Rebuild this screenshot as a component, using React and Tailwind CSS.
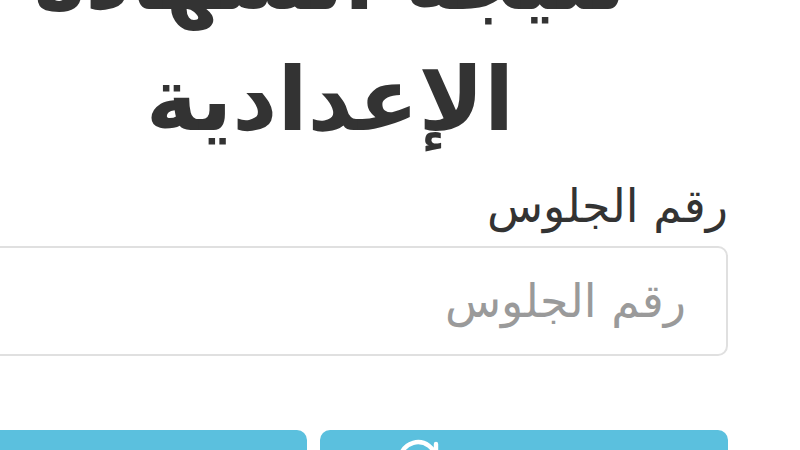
import React from 'react';

const arabic = { fontFamily: '"DejaVu Sans", "Noto Sans", sans-serif' };

function SearchIcon() {
    return (
        <svg width="48" height="48" viewBox="0 0 24 24" fill="none" stroke="white" strokeWidth="2.2" strokeLinecap="round" className="shrink-0">
            <circle cx="11" cy="11" r="9" />
            <path d="M17.5 17.5l5 5" />
        </svg>
    );
}

function RefreshIcon() {
    return (
        <svg width="48" height="48" viewBox="0 0 24 24" fill="none" stroke="white" strokeWidth="2.2" strokeLinecap="round" className="shrink-0">
            <path d="M20 11a9 9 0 1 0-2.6 6.4" />
            <path d="M20 3v8h-7" />
        </svg>
    );
}

export default function App() {
    return (
        <div className="w-[800px] h-[450px] overflow-hidden bg-white" style={arabic}>
            <div dir="rtl" className="-ml-[102px] w-[830px] mr-auto">
                <h1 className="-mt-[82px] ml-[34px] text-center text-[88px] leading-[121px] font-bold text-[#333333]">
                    نتيجة الشهادة
                    <br />
                    الإعدادية
                </h1>

                <label className="block mt-[18px] text-[46px] leading-[56px] text-[#333333]">رقم الجلوس</label>

                <div className="mt-[12px] h-[110px] rounded-[10px] border-2 border-[#e0e0e0] flex items-center pr-[40px]">
                    <span className="text-[46px] text-[#9a9a9a]">رقم الجلوس</span>
                </div>

                <div className="mt-[74px] grid grid-cols-2 gap-[13px]">
                    <div className="h-[80px] rounded-[10px] bg-[#5bc0de] text-white">
                        <div dir="ltr" className="flex items-start gap-4 pt-[8px] pl-[76px]">
                            <RefreshIcon />
                            <span dir="rtl" className="text-[42px] leading-[50px] mt-[6px] whitespace-nowrap">إعادة البحث</span>
                        </div>
                    </div>
                    <div className="h-[80px] rounded-[10px] bg-[#5bc0de] text-white">
                        <div dir="ltr" className="flex items-start gap-4 pt-[8px] pl-[44px]">
                            <SearchIcon />
                            <span dir="rtl" className="text-[42px] leading-[50px] mt-[6px] whitespace-nowrap">عرض النتيجة</span>
                        </div>
                    </div>
                </div>
            </div>
        </div>
    );
}
